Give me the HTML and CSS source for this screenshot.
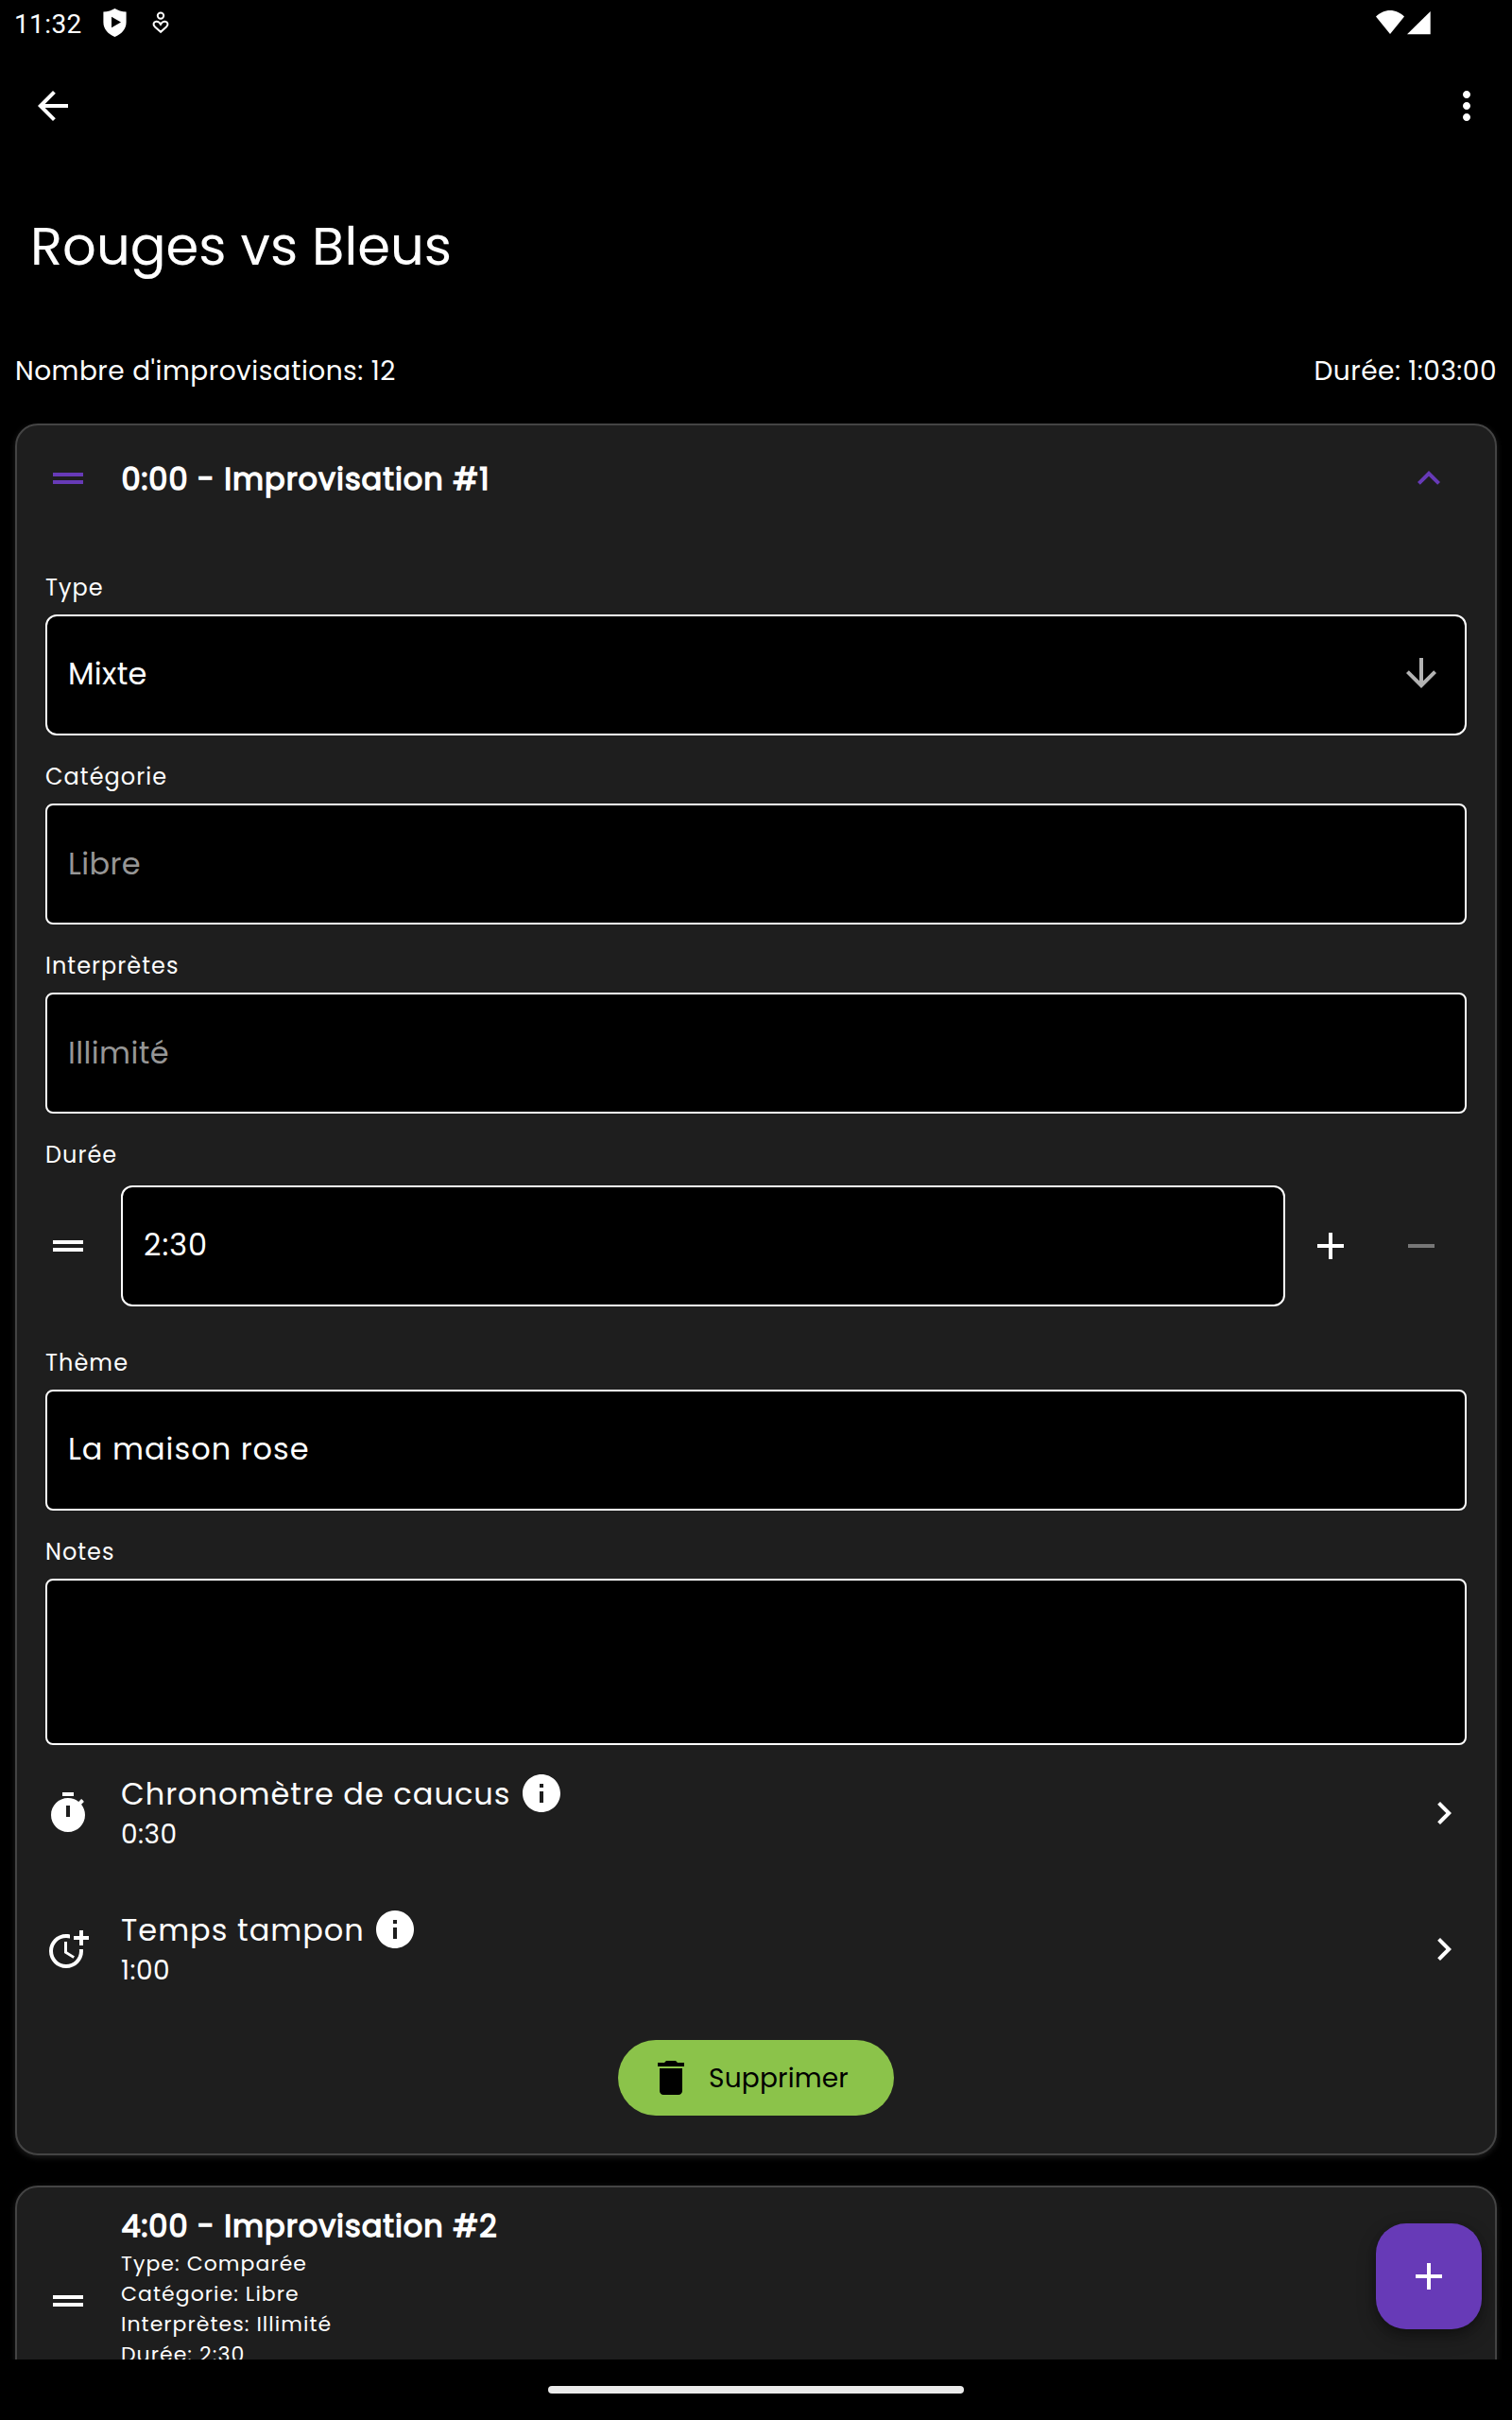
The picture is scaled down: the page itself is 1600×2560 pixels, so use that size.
FILE: index.html
```html
<!DOCTYPE html>
<html lang="fr">
<head>
<meta charset="utf-8">
<title>Rouges vs Bleus</title>
<link rel="stylesheet" href="styles.css">
</head>
<body>
<div class="screen">
  <header class="status-bar">
    <span class="clock">11:32</span>
    <svg class="shield" viewBox="0 0 25 31" preserveAspectRatio="none"><path fill="#fff" fill-rule="evenodd" d="M12.5 0C15.5 2 20 3.4 24.6 3.7V15c0 7.500-4.800 13-12.100 16C5.200 28 .4 22.500.4 15V3.700C5 3.400 9.500 2 12.500 0zM9 9v12l10-6z"/></svg>
    <svg class="heart" viewBox="0 0 18 24" fill="none" stroke="#fff" stroke-width="2"><circle cx="9" cy="4.600" r="3.200"/><path d="M9 21.800 3 16.400C.6 14.200 1.200 11 4.200 10.700c2-.2 3.700.9 4.800 3 1.100-2.100 2.800-3.200 4.800-3 3 .3 3.600 3.500 1.200 5.700z"/></svg>
    <svg class="signals" viewBox="0 0 58 26" fill="#fff"><path d="M15 25 0 6.500C4.200 2.500 9.400 0 15 0s10.800 2.500 15 6.500z"/><path d="M57.700 1v24.300H33z"/></svg>
  </header>

  <nav class="app-bar">
    <svg class="icon" viewBox="0 0 24 24"><path d="M20 11H7.830l5.590-5.590L12 4l-8 8 8 8 1.410-1.410L7.830 13H20z"/></svg>
    <svg class="icon" viewBox="0 0 24 24"><path d="M12 8c1.100 0 2-.9 2-2s-.9-2-2-2-2 .9-2 2 .9 2 2 2zm0 2c-1.100 0-2 .9-2 2s.9 2 2 2 2-.9 2-2-.9-2-2-2zm0 6c-1.100 0-2 .9-2 2s.9 2 2 2 2-.9 2-2-.9-2-2-2z"/></svg>
  </nav>

  <h1 class="title">Rouges vs Bleus</h1>

  <div class="stats">
    <span>Nombre d'improvisations: 12</span>
    <span>Durée: 1:03:00</span>
  </div>

  <main class="list">
    <section class="card">
      <div class="card-head">
        <svg class="icon accent" viewBox="0 0 24 24"><path d="M20 9H4v2h16V9zM4 15h16v-2H4v2z"/></svg>
        <h2 class="card-title">0:00 - Improvisation #1</h2>
        <svg class="icon accent" viewBox="0 0 24 24"><path d="M12 8l-6 6 1.410 1.410L12 10.830l4.590 4.580L18 14z"/></svg>
      </div>
      <div class="card-body">
        <div class="label">Type</div>
        <div class="field round"><span class="value select">Mixte</span>
          <svg class="icon dim" viewBox="0 0 24 24"><path d="M20 12l-1.410-1.410L13 16.170V4h-2v12.170l-5.580-5.590L4 12l8 8z"/></svg>
        </div>

        <div class="label">Catégorie</div>
        <div class="field"><span class="value hint">Libre</span></div>

        <div class="label">Interprètes</div>
        <div class="field"><span class="value hint">Illimité</span></div>

        <div class="label">Durée</div>
        <div class="duration">
          <svg class="icon" viewBox="0 0 24 24"><path d="M20 9H4v2h16V9zM4 15h16v-2H4v2z"/></svg>
          <div class="field round"><span class="value">2:30</span></div>
          <svg class="icon" viewBox="0 0 24 24"><path d="M19 13h-6v6h-2v-6H5v-2h6V5h2v6h6z"/></svg>
          <svg class="icon off" viewBox="0 0 24 24"><path d="M19 13H5v-2h14z"/></svg>
        </div>

        <div class="label">Thème</div>
        <div class="field"><span class="value">La maison rose</span></div>

        <div class="label">Notes</div>
        <div class="field notes"></div>

        <div class="option">
          <svg class="icon" viewBox="0 0 24 24"><path fill-rule="evenodd" d="M15 1H9v2h6V1zm-4 13h2V8h-2v6zm8.030-6.610l1.420-1.420c-.43-.51-.9-.99-1.410-1.410l-1.420 1.420C16.070 4.740 14.120 4 12 4c-4.970 0-9 4.030-9 9s4.020 9 9 9 9-4.030 9-9c0-2.120-.74-4.070-1.970-5.610z"/></svg>
          <div class="option-text">
            <div class="option-name"><span>Chronomètre de caucus</span>
              <svg class="icon" viewBox="0 0 24 24"><path d="M12 2C6.480 2 2 6.480 2 12s4.480 10 10 10 10-4.480 10-10S17.520 2 12 2zm1 15h-2v-6h2v6zm0-8h-2V7h2v2z"/></svg>
            </div>
            <div class="option-value">0:30</div>
          </div>
          <svg class="icon" viewBox="0 0 24 24"><path d="M10 6L8.590 7.410 13.170 12l-4.580 4.590L10 18l6-6z"/></svg>
        </div>

        <div class="option">
          <svg class="icon" viewBox="0 0 24 24"><path d="M10 8v6l4.700 2.900.8-1.200-4-2.400V8z"/><path d="M17.920 12c.05.33.08.66.08 1 0 3.900-3.100 7-7 7s-7-3.100-7-7 3.100-7 7-7c.7 0 1.370.1 2 .29V4.230c-.64-.15-1.310-.23-2-.23-5 0-9 4-9 9s4 9 9 9 9-4 9-9c0-.34-.02-.67-.06-1z"/><path d="M20 5V2h-2v3h-3v2h3v3h2V7h3V5z"/></svg>
          <div class="option-text">
            <div class="option-name"><span>Temps tampon</span>
              <svg class="icon" viewBox="0 0 24 24"><path d="M12 2C6.480 2 2 6.480 2 12s4.480 10 10 10 10-4.480 10-10S17.520 2 12 2zm1 15h-2v-6h2v6zm0-8h-2V7h2v2z"/></svg>
            </div>
            <div class="option-value">1:00</div>
          </div>
          <svg class="icon" viewBox="0 0 24 24"><path d="M10 6L8.590 7.410 13.170 12l-4.580 4.590L10 18l6-6z"/></svg>
        </div>

        <button class="delete">
          <svg class="icon" viewBox="0 0 24 24"><path d="M6 19c0 1.100.9 2 2 2h8c1.100 0 2-.9 2-2V7H6v12zM19 4h-3.500l-1-1h-5l-1 1H5v2h14V4z"/></svg>
          <span>Supprimer</span>
        </button>
      </div>
    </section>

    <section class="card collapsed">
      <svg class="icon" viewBox="0 0 24 24"><path d="M20 9H4v2h16V9zM4 15h16v-2H4v2z"/></svg>
      <div class="summary">
        <h2 class="card-title">4:00 - Improvisation #2</h2>
        <p>Type: Comparée</p>
        <p>Catégorie: Libre</p>
        <p>Interprètes: Illimité</p>
        <p>Durée: 2:30</p>
      </div>
    </section>
  </main>

  <button class="fab"><svg class="icon" viewBox="0 0 24 24"><path d="M19 13h-6v6h-2v-6H5v-2h6V5h2v6h6z"/></svg></button>

  <footer class="nav-bar"><div class="pill"></div></footer>
</div>
</body>
</html>
```
FILE: styles.css
```css
* { box-sizing: border-box; }

body {
  margin: 0;
  background: #000;
  color: #fff;
  font-family: "Poppins", "Inter", sans-serif;
  font-feature-settings: "cv11";
}

h1, h2, p { margin: 0; font-weight: 400; }
button { border: 0; padding: 0; font: inherit; color: inherit; }

.screen {
  position: relative;
  display: flex;
  flex-direction: column;
  width: 1600px;
  height: 2560px;
  overflow: hidden;
}

.icon { display: block; flex: none; width: 48px; height: 48px; fill: currentColor; }
.accent { color: #673ab7; }
.dim { color: #b3b3b3; }
.off { color: #777; }

/* Status bar */
.status-bar { display: flex; align-items: flex-start; flex: none; height: 52px; padding: 9px 86px 0 15px; }
.clock { width: 94px; font: 400 28px/33px Roboto, sans-serif; letter-spacing: .38px; }
.shield { width: 25px; height: 30px; }
.heart { width: 18px; height: 24px; margin: 3px 0 0 27px; }
.signals { width: 58px; height: 26px; margin: 2px 0 0 auto; }

/* App bar */
.app-bar { display: flex; align-items: center; justify-content: space-between; flex: none; height: 120px; padding: 0 24px 0 32px; }
.title { flex: none; height: 176px; padding-left: 32px; font-size: 56px; line-height: 177px; }
.stats { display: flex; justify-content: space-between; flex: none; height: 100px; padding: 0 16px; font-size: 28px; line-height: 89px; letter-spacing: .5px; }

/* Cards */
.list { flex: 1; min-height: 0; padding: 0 16px; overflow: hidden; }
.card {
  border: 2px solid #444;
  border-radius: 24px;
  background: #1e1e1e;
  box-shadow: 0 2px 6px rgba(255, 255, 255, .12);
}
.card-head { display: flex; align-items: center; gap: 32px; height: 112px; padding: 0 46px 0 30px; }
.card-title { flex: 1; font-size: 32px; line-height: 48px; letter-spacing: 1px; text-indent: .4px; -webkit-text-stroke: 1.4px currentColor; }
.card-head .card-title { padding-top: 1px; }
.card-body { padding: 16px 30px 40px; }

.label { height: 48px; margin: 20px 0 4px; font-size: 24px; line-height: 47px; letter-spacing: 1.05px; }
.field {
  display: flex;
  align-items: center;
  justify-content: space-between;
  height: 128px;
  padding: 0 22px;
  border: 2px solid #fff;
  border-radius: 8px;
  background: #000;
}
.field.round { border-radius: 12px; }
.field.notes { height: 176px; }
.value { padding-bottom: 3px; font-size: 32px; line-height: 46px; letter-spacing: 1px; }
.hint { padding-bottom: 1px; color: #969696; letter-spacing: .4px; }
.select { letter-spacing: .3px; }
.field .icon { margin-bottom: 4px; }

.duration { display: flex; align-items: center; margin: 8px 0 36px; padding-right: 24px; }
.duration .field { flex: 1; margin: 0 24px 0 32px; }
.duration .off { margin-left: 48px; }

.option { display: flex; align-items: center; gap: 32px; height: 144px; }
.option-text { flex: 1; padding-bottom: 5px; }
.option-name { display: flex; gap: 8px; height: 50px; font-size: 32px; line-height: 49px; letter-spacing: 1px; }
.option-value { font-size: 28px; line-height: 35px; letter-spacing: .5px; }

.delete {
  display: flex;
  align-items: center;
  gap: 16px;
  width: 292px;
  height: 80px;
  margin: 24px auto 0;
  padding-left: 32px;
  border-radius: 40px;
  background: #8bc34a;
  color: #000;
  font-size: 28px;
  line-height: 40px;
  letter-spacing: .2px;
}
.delete span { padding-top: 1px; }

.collapsed { display: flex; align-items: center; gap: 32px; height: 244px; margin-top: 32px; padding: 0 30px; }
.summary { height: 208px; margin-top: 1px; font-size: 22px; line-height: 32px; letter-spacing: 1.05px; }

.fab {
  position: absolute;
  right: 32px;
  bottom: 96px;
  display: flex;
  align-items: center;
  justify-content: center;
  width: 112px;
  height: 112px;
  border-radius: 32px;
  background: #673ab7;
  box-shadow: 0 8px 20px rgba(0, 0, 0, .3), 0 4px 8px rgba(0, 0, 0, .2);
}

/* Gesture bar */
.nav-bar { display: flex; align-items: center; justify-content: center; flex: none; height: 64px; background: #000; z-index: 1; }
.pill { width: 440px; height: 8px; border-radius: 4px; background: #ebebeb; }
```
